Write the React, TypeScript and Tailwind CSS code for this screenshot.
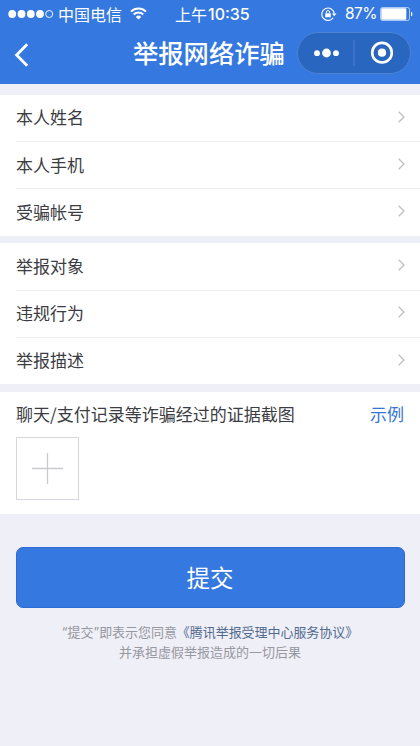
type FieldGroupProps = {
  fields: string[];
};

const personalFields = ["本人姓名", "本人手机", "受骗帐号"];
const reportFields = ["举报对象", "违规行为", "举报描述"];

function SignalDots() {
  return (
    <svg className="h-[10px] w-[46px] shrink-0" viewBox="0 0 46 10" fill="white">
      <circle cx="4.2" cy="5" r="3.9" />
      <circle cx="13.5" cy="5" r="3.9" />
      <circle cx="22.8" cy="5" r="3.9" />
      <circle cx="32" cy="5" r="3.9" />
      <circle cx="41.2" cy="5" r="3.5" fill="none" stroke="white" strokeWidth="0.9" />
    </svg>
  );
}

function WifiIcon() {
  return (
    <svg className="h-[13px] w-[17px] shrink-0" viewBox="0 0 17 13" fill="none" stroke="white">
      <path d="M1 4.6a10.6 10.6 0 0 1 15 0" strokeWidth="2" />
      <path d="M3.7 7.5a6.8 6.8 0 0 1 9.6 0" strokeWidth="1.9" />
      <path d="M8.5 12.6 5.8 9.9a3.8 3.8 0 0 1 5.4 0Z" fill="white" stroke="none" />
    </svg>
  );
}

function RotationLockIcon() {
  return (
    <svg className="h-[14px] w-[16px] shrink-0" viewBox="0 0 16 14" fill="none" stroke="white">
      <path d="M12.2 10.7A6.2 6.2 0 1 1 13.2 6.8" strokeWidth="1.1" />
      <path d="M10.9 6.4h4.6l-2.3 2.9Z" fill="white" stroke="none" />
      <rect x="4.2" y="6.2" width="5.6" height="4.1" rx="0.4" fill="white" stroke="none" />
      <path d="M5.4 6.4V5.2a1.6 1.6 0 0 1 3.2 0v1.2" strokeWidth="1" />
    </svg>
  );
}

function BatteryIcon() {
  return (
    <svg className="h-[14px] w-[33px] shrink-0" viewBox="0 0 33 14" fill="none">
      <rect x="0.5" y="0.5" width="29" height="13" rx="2" stroke="white" strokeOpacity="0.75" strokeWidth="0.8" />
      <rect x="1.3" y="1.3" width="25" height="11.4" rx="0.8" fill="white" />
      <path d="M31 4.7c1.9.6 1.9 4 0 4.6Z" fill="white" />
    </svg>
  );
}

function StatusBar() {
  return (
    <div className="flex h-[27px] items-center text-white">
      <div className="flex w-[175px] items-center pl-2">
        <SignalDots />
        <span className="ml-1 w-[64px] text-[16px] leading-[26px]">中国电信</span>
        <span className="ml-2 flex">
          <WifiIcon />
        </span>
      </div>
      <p className="flex items-center text-[16px] leading-[26px]">
        上午<span className="ml-px font-['Inter'] text-[16px] font-medium">10:35</span>
      </p>
      <div className="ml-auto flex items-center pr-[7px]">
        <RotationLockIcon />
        <span className="mr-1 ml-2 w-[31px] font-['Inter'] text-[15.5px] leading-[26px] tracking-[-0.6px]">
          87%
        </span>
        <BatteryIcon />
      </div>
    </div>
  );
}

function NavBar() {
  return (
    <div className="flex h-[57px] items-start pt-[5px] pr-[9px] pl-[14px]">
      <svg className="mt-[11px] h-6 w-[15px]" viewBox="0 0 15 24" fill="none" stroke="white" strokeWidth="2.8">
        <path d="M13.2 1.2 2.6 12l10.6 10.8" />
      </svg>
      <h1 className="ml-[104px] text-[25.3px] leading-[41px] font-medium whitespace-nowrap text-white">
        举报网络诈骗
      </h1>
      <div className="ml-auto flex h-[42px] w-[114px] shrink-0 items-center rounded-full border border-[#4c83d2] bg-[#2966bf]">
        <svg className="h-10 w-28" viewBox="0 0 112 40" fill="white">
          <circle cx="19" cy="20.2" r="2.9" />
          <circle cx="28.5" cy="20" r="4.4" />
          <circle cx="38" cy="20.2" r="2.9" />
          <path d="M56 7v26" stroke="#4379cd" strokeWidth="1.3" />
          <circle cx="84" cy="19.7" r="9.8" fill="none" stroke="white" strokeWidth="2.6" />
          <circle cx="84" cy="19.7" r="4.1" />
        </svg>
      </div>
    </div>
  );
}

function FieldGroup({ fields }: FieldGroupProps) {
  return (
    <ul className="bg-white pl-4">
      {fields.map((field) => (
        <li
          key={field}
          className="flex h-[47.2px] items-center justify-between border-b border-[#f0f0f3] pr-[15px] text-[17px] last:h-[46.6px] last:border-b-0"
        >
          <span className="pb-[2px]">{field}</span>
          <svg className="mb-[3px] h-3 w-[7px]" viewBox="0 0 7 12" fill="none" stroke="#bebec3" strokeWidth="1.3">
            <path d="m.7.7 5.3 5.3-5.3 5.3" />
          </svg>
        </li>
      ))}
    </ul>
  );
}

export default function App() {
  return (
    <main className="h-[746px] w-[420px] overflow-hidden bg-[#efeff8] font-['Noto_Sans_CJK_SC',sans-serif] text-[#3c3c43]">
      <header className="h-[84px] bg-[#3478e0]">
        <StatusBar />
        <NavBar />
      </header>

      <div className="mt-[11px] flex flex-col gap-[7.5px]">
        <FieldGroup fields={personalFields} />
        <FieldGroup fields={reportFields} />
        <section className="h-[122px] bg-white px-4">
          <div className="flex items-center justify-between pt-2 text-[17px] leading-[27px]">
            <h2>聊天/支付记录等诈骗经过的证据截图</h2>
            <button className="text-[#3478d4]">示例</button>
          </div>
          <button className="mt-[10px] flex h-[63px] w-[63px] items-center justify-center border border-[#d6d6de]">
            <svg className="h-[31px] w-[31px]" viewBox="0 0 31 31" stroke="#c9c9cf" strokeWidth="1.3">
              <path d="M15.5 0v31M0 15.5h31" />
            </svg>
          </button>
        </section>
      </div>

      <div className="px-[15.5px] pt-[33.5px]">
        <button className="h-[60.5px] w-full rounded-[7px] border border-[#2d6dd2] bg-[#3478e0] text-[23.5px] text-white">
          提交
        </button>
      </div>

      <footer className="pt-[14px] text-center text-[13px] leading-5 text-[#97979e]">
        <p className="tracking-[-0.05px]">
          <span className="font-['Inter']">“</span>提交<span className="font-['Inter']">”</span>
          即表示您同意<a className="text-[#526a8e]">《腾讯举报受理中心服务协议》</a>
        </p>
        <p>并承担虚假举报造成的一切后果</p>
      </footer>
    </main>
  );
}
